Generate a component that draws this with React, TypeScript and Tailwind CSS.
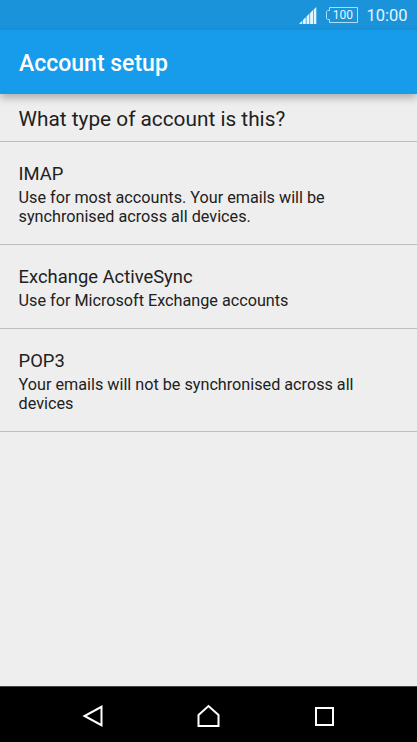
const accountTypes = [
  { name: 'IMAP', description: 'Use for most accounts. Your emails will be synchronised across all devices.' },
  { name: 'Exchange ActiveSync', description: 'Use for Microsoft Exchange accounts' },
  { name: 'POP3', description: 'Your emails will not be synchronised across all devices' },
]

function StatusBar() {
  return (
    <div className="flex h-[30px] items-center justify-end bg-[#1a93db] pr-[9.5px] text-[#e3f6ff]">
      <svg width="18" height="17" viewBox="0 0 18 17" className="mr-[9px]" fill="currentColor">
        <path d="M0 17l3.2-3.2V17zM3.9 17v-3.9l2.9-2.9V17zM7.5 17V9.5l2.9-2.9V17zM11.1 17V5.9L14 3.1V17zM14.7 17V2.5L17.3 0v17z" />
      </svg>
      <div className="relative mr-[8.5px] flex h-4 w-8 items-center justify-center">
        <svg width="32" height="16" viewBox="0 0 32 16" className="absolute inset-0" fill="none" stroke="currentColor" strokeOpacity=".75">
          <path d="M3.5 .5h28v15h-28v-3h-2l-1-1v-7l1-1h2z" />
        </svg>
        <span className="pl-[2px] text-[12px] leading-[15px]">100</span>
      </div>
      <span className="pt-px text-[16.5px] leading-5">10:00</span>
    </div>
  )
}

function NavigationBar() {
  return (
    <div className="flex h-14 items-center border-t border-[#444444] bg-black pl-[82px] pt-[3px] text-white">
      <svg width="22" height="24" viewBox="0 0 22 24" className="mr-[92px]" fill="none" stroke="currentColor" strokeWidth="2">
        <path d="M19.5 2.8v18.4L2.5 12z" />
      </svg>
      <svg width="24" height="24" viewBox="0 0 24 24" className="mr-[95px]" fill="none" stroke="currentColor" strokeWidth="2">
        <path d="M2.5 11L12.5 2l10 9v11h-20z" />
      </svg>
      <svg width="19" height="19" viewBox="0 0 19 19" fill="none" stroke="currentColor" strokeWidth="2">
        <path d="M1 1h17v17H1z" />
      </svg>
    </div>
  )
}

export default function App() {
  return (
    <div className="flex h-[742px] w-[417px] flex-col bg-[#eeeeee] font-[Roboto,sans-serif] text-[#212121]">
      <StatusBar />
      <header className="relative flex h-16 items-center bg-[#179cec] pl-[19px] pt-1 shadow-[0_4px_8px_rgba(0,0,0,0.27)]">
        <h1 className="text-[23px] leading-[34px] font-medium text-white">Account setup</h1>
      </header>
      <main className="flex-1">
        <h2 className="h-12 border-b border-[#bdbdbd] pl-[18.6px] pt-[10px] text-[20.8px] leading-[30px]">What type of account is this?</h2>
        {accountTypes.map((type) => (
          <button key={type.name} className="block w-full border-b border-[#bdbdbd] px-[18.6px] pb-[18px] pt-[18px] text-left">
            <div className="mb-px text-[18.4px] leading-[27px]">{type.name}</div>
            <div className="text-[16.2px] leading-[19px]">{type.description}</div>
          </button>
        ))}
      </main>
      <NavigationBar />
    </div>
  )
}
